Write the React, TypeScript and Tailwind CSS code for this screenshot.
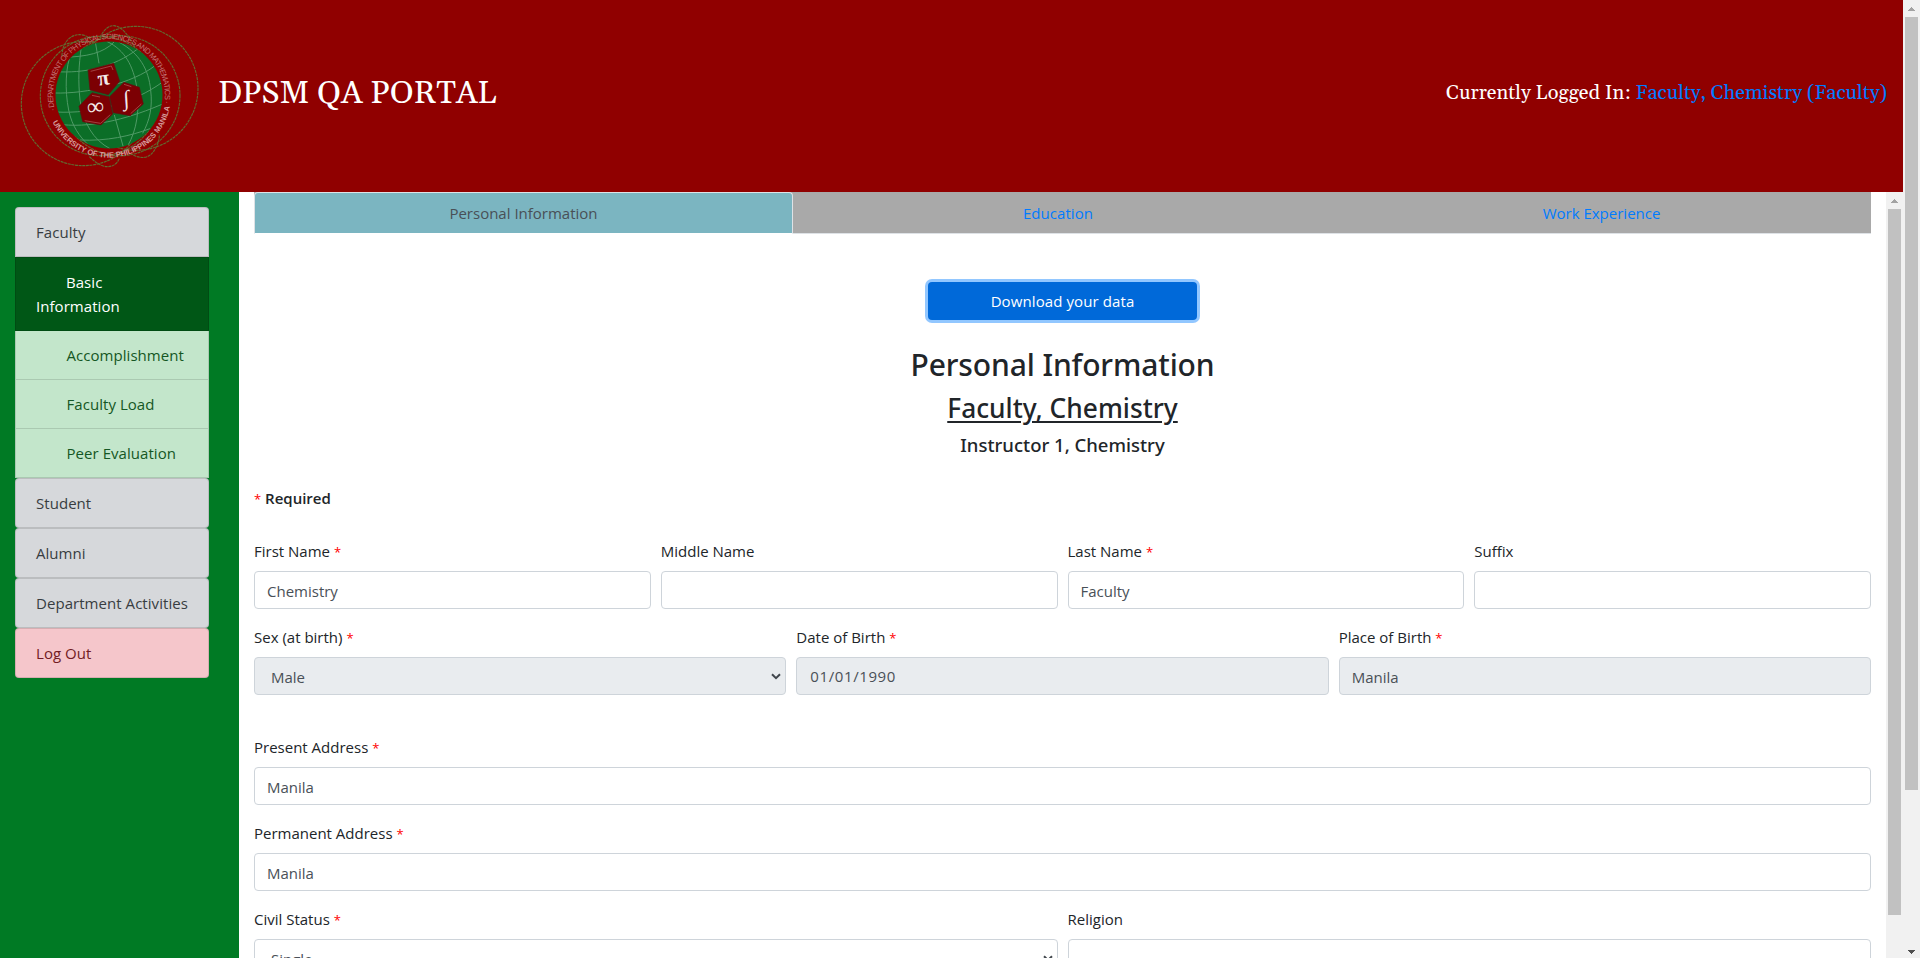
import type { ReactNode } from 'react';

function Logo() {
  return (
    <svg className="block h-[154px] w-[190px] shrink-0" viewBox="45 57 570 462" fill="none">
      <defs>
        <clipPath id="globe">
          <circle cx="327" cy="285" r="160" />
        </clipPath>
        <path id="ring" d="M327 453 A168 168 0 1 1 327.1 453" />
        <path id="ringLow" d="M158 366 A186 186 0 0 0 512 300" />
      </defs>
      <g stroke="#626a30" strokeWidth="3.4" strokeDasharray="9 2">
        <circle cx="250" cy="311" r="186" />
        <circle cx="408" cy="265" r="186" />
        <circle cx="300" cy="288" r="179" />
        <circle cx="360" cy="287" r="180" />
        <path d="M186 168 C186 130 210 104 238 104 C260 104 272 116 280 130" />
        <path d="M300 112 C312 88 326 77 342 77 C366 80 384 104 405 142" />
        <path d="M268 470 C292 492 306 500 322 500 C342 500 354 488 358 474" />
        <path d="M400 466 C430 478 446 472 458 458 C472 440 478 422 478 404" />
      </g>
      <circle cx="327" cy="285" r="160.5" fill="#0b6e27" />
      <g clipPath="url(#globe)" stroke="#4f9a66" strokeWidth="3">
        <path d="M286 126 L297 190 M343 345 L371 445" />
        <path d="M244 140 C236 200 234 240 240 300 C250 370 280 420 330 446" />
        <path d="M215 155 C196 200 194 270 206 330 C216 380 240 410 262 432" />
        <path d="M320 124 C376 150 400 200 410 260 C420 330 410 390 384 436" />
        <path d="M356 126 C420 160 446 210 452 270 C458 320 450 360 428 400" />
        <path d="M190 172 C260 170 310 160 342 126" />
        <path d="M166 215 C250 220 340 204 414 146" />
        <path d="M164 279 C260 282 400 250 466 196" />
        <path d="M168 336 C280 342 400 310 488 246" />
        <path d="M186 374 C290 384 400 350 488 312" />
        <path d="M240 420 C320 424 390 408 450 386" />
      </g>
      <g fill="#7c0003" stroke="#5d1010" strokeWidth="2">
        <path d="M264 210 L341 190 L359 244 L325 284 L270 270 Z" />
        <path d="M276 278 L327 290 L338 342 L303 375 L248 365 L237 319 Z" />
        <path d="M372 247 L418 262 L430 312 L391 347 L340 338 L329 290 Z" />
      </g>
      <g stroke="#a94d4d" strokeWidth="2.5">
        <path d="M272 214 L334 198 L339 210" />
        <path d="M254 362 L302 370 L331 344 M276 286 L300 291" />
        <path d="M372 253 L394 260 M424 312 L392 341" />
      </g>
      <g className="font-['Liberation_Serif',serif] font-bold" fill="#f3eaea" textAnchor="middle">
        <text x="311" y="255" fontSize="64" transform="rotate(-8 311 240)">π</text>
        <text x="287" y="343" fontSize="72" transform="rotate(-6 287 323)" className="font-normal">∞</text>
        <text x="379" y="317" fontSize="66" transform="rotate(-4 379 303)" className="font-normal">∫</text>
      </g>
      <g className="font-['Liberation_Sans',sans-serif]" fill="#c07474" fontSize="23">
        <text>
          <textPath href="#ring" startOffset="20.5%" textLength="600" lengthAdjust="spacing">
            · DEPARTMENT OF PHYSICAL SCIENCES AND MATHEMATICS ·
          </textPath>
        </text>
        <text fill="#d69c9c" className="font-bold">
          <textPath href="#ringLow" textLength="470" lengthAdjust="spacing">
            UNIVERSITY OF THE PHILIPPINES MANILA
          </textPath>
        </text>
      </g>
    </svg>
  );
}

const itemBase = 'border border-black/[.125] px-5 leading-6 tracking-[0.05px]';

function GroupItem({ children, danger = false }: { children: ReactNode; danger?: boolean }) {
  const tone = danger ? 'bg-[#f5c6cb] text-[#721c24]' : 'bg-[#d6d8db] text-[#383d41]';
  return (
    <a className={`${itemBase} ${tone} flex h-[50px] items-center whitespace-nowrap rounded`}>{children}</a>
  );
}

function SubItem({ children }: { children: ReactNode }) {
  return (
    <a className={`${itemBase} flex h-[49px] items-center border-t-0 bg-[#c3e6cb] pl-[50.5px] text-[#155724]`}>
      {children}
    </a>
  );
}

function Sidebar() {
  return (
    <nav className="flex w-[239px] shrink-0 flex-col bg-[#007a24] pl-[15px] pr-[30px] pt-[15px]">
      <a className={`${itemBase} flex h-[50px] items-center rounded-t bg-[#d6d8db] text-[#383d41]`}>Faculty</a>
      <a className={`${itemBase} flex h-[74px] flex-col bg-[#005716] pt-[12px] text-white`}>
        <span className="pl-[30px]">Basic</span>
        <span>Information</span>
      </a>
      <SubItem>Accomplishment</SubItem>
      <SubItem>Faculty Load</SubItem>
      <SubItem>Peer Evaluation</SubItem>
      <GroupItem>Student</GroupItem>
      <GroupItem>Alumni</GroupItem>
      <GroupItem>Department Activities</GroupItem>
      <GroupItem danger>Log Out</GroupItem>
    </nav>
  );
}

interface FieldProps {
  label: string;
  value?: string;
  required?: boolean;
  disabled?: boolean;
  select?: boolean;
  date?: boolean;
}

function Field({ label, value = '', required, disabled, select, date }: FieldProps) {
  return (
    <div className="min-w-0 flex-1">
      <div className="mb-2 h-6 leading-[25px]">
        {label} {required && <span className="text-[13px] text-[#ff0000]">*</span>}
      </div>
      <div
        className={`flex h-[38px] items-center justify-between rounded border border-[#ced4da] text-[#495057] ${
          disabled ? 'bg-[#e9ecef]' : 'bg-white'
        } ${select ? 'pl-4 pr-1' : 'px-3'}`}
      >
        <span className={date ? 'pl-px tracking-[0.6px]' : 'pt-0.5'}>{value}</span>
        {select && (
          <svg className="h-[7px] w-[10px]" viewBox="0 0 10 7" fill="none">
            <path d="M1 1.2 L5 5.2 L9 1.2" stroke="#40464c" strokeWidth="2" />
          </svg>
        )}
      </div>
    </div>
  );
}

function Row({ children, className = 'mb-4' }: { children: ReactNode; className?: string }) {
  return <div className={`flex gap-[10px] ${className}`}>{children}</div>;
}

function Arrow({ down = false }: { down?: boolean }) {
  return (
    <svg className="h-[17px] w-[17px]" viewBox="0 0 17 17" shapeRendering="crispEdges">
      {down ? <path d="M5 6 H12 L8.5 10 Z" fill="#505050" /> : <path d="M5 11 H12 L8.5 7 Z" fill="#a3a3a3" />}
    </svg>
  );
}

export default function App() {
  return (
    <div className="flex h-screen w-full overflow-hidden bg-white font-['Open_Sans','Noto_Sans',sans-serif] text-[15px] leading-6 text-[#212529]">
      <div className="flex min-w-0 flex-1 flex-col">
        <header className="flex h-[192px] shrink-0 items-center bg-[#900000] pl-[15px] pr-4 font-['Gelasio','Georgia','Liberation_Serif',serif] text-white">
          <Logo />
          <h1 className="ml-[13px] pb-[5px] text-[32px] leading-10 tracking-[0.05px]">DPSM QA PORTAL</h1>
          <p className="ml-auto pb-[7px] text-xl">
            Currently Logged In: <a className="text-[#007bff]">Faculty, Chemistry (Faculty)</a>
          </p>
        </header>
        <div className="flex min-h-0 flex-1">
          <Sidebar />
          <main className="min-w-0 flex-1 overflow-hidden px-[15px]">
            <ul className="grid h-[42px] grid-cols-[539px_530px_1fr] border-b border-[#dee2e6] bg-[#a9a9a9] text-center">
              <li className="-mb-px rounded-t border border-b-white border-[#dee2e6] bg-[#7bb5c1] pt-2 leading-6 text-[#495057]">
                Personal Information
              </li>
              <li className="pt-[9px] leading-6 tracking-[0.05px] text-[#007bff]">Education</li>
              <li className="pl-[9px] pt-[9px] leading-6 text-[#007bff]">Work Experience</li>
            </ul>
            <div className="flex flex-col items-center pt-12">
              <button className="h-[38px] w-[269px] rounded bg-[#0069d9] tracking-[0.1px] text-white ring-3 ring-[#268fff]/50">
                Download your data
              </button>
              <div className="mt-6 flex flex-col items-center font-['Noto_Sans',sans-serif] font-medium">
                <h2 className="h-[46px] text-[30px] leading-[42px] tracking-[-0.12px]">Personal Information</h2>
                <h3 className="h-[42px] text-[26.3px] leading-[36px] underline decoration-2 underline-offset-3">
                  Faculty, Chemistry
                </h3>
                <h5 className="h-6 text-[18.5px] leading-[25px]">Instructor 1, Chemistry</h5>
              </div>
            </div>
            <p className="mb-[29px] mt-[30px] h-6">
              <span className="text-[13px] text-[#ff0000]">*</span>{' '}
              <b className="font-semibold">Required</b>
            </p>
            <Row>
              <Field label="First Name" value="Chemistry" required />
              <Field label="Middle Name" />
              <Field label="Last Name" value="Faculty" required />
              <Field label="Suffix" />
            </Row>
            <Row className="mb-10">
              <Field label="Sex (at birth)" value="Male" required disabled select />
              <Field label="Date of Birth" value="01/01/1990" required disabled date />
              <Field label="Place of Birth" value="Manila" required disabled />
            </Row>
            <Row>
              <Field label="Present Address" value="Manila" required />
            </Row>
            <Row>
              <Field label="Permanent Address" value="Manila" required />
            </Row>
            <Row>
              <Field label="Civil Status" value="Single" required select />
              <Field label="Religion" />
            </Row>
          </main>
          <div className="flex w-[17px] shrink-0 flex-col items-center bg-[#f1f1f1]">
            <Arrow />
            <div className="h-[706px] w-[13px] bg-[#c1c1c1]" />
          </div>
        </div>
      </div>
      <div className="flex w-[17px] shrink-0 flex-col items-center bg-[#f1f1f1]">
        <Arrow />
        <div className="h-[773px] w-[13px] bg-[#c1c1c1]" />
        <div className="mt-auto h-[14px]">
          <Arrow down />
        </div>
      </div>
    </div>
  );
}
